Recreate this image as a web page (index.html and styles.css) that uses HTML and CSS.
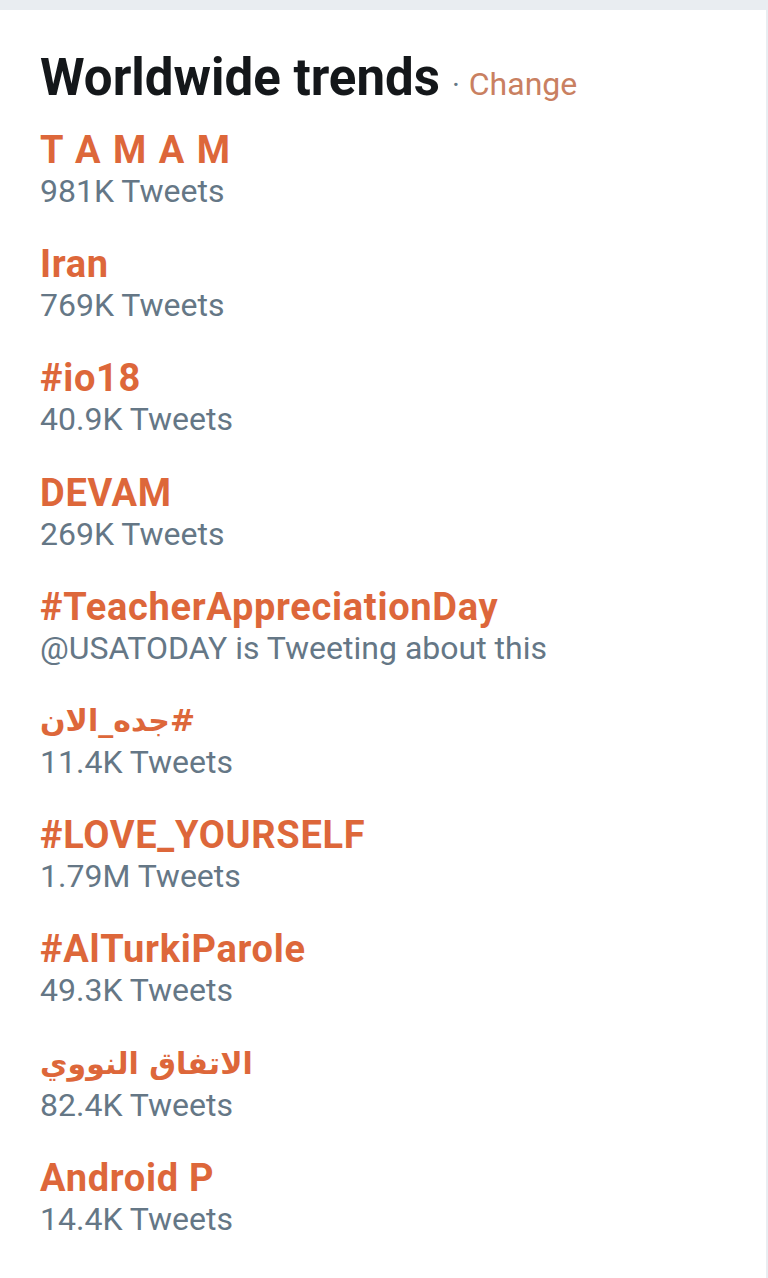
FILE: index.html
```html
<!DOCTYPE html>
<html>
<head>
<meta charset="utf-8">
<link rel="stylesheet" href="styles.css">
</head>
<body>
<div class="panel">
  <div class="header">
    <span class="heading">Worldwide trends</span>
    <span class="dot">·</span>
    <span class="change">Change</span>
  </div>
  <ul class="trends">
    <li class="trend"><div class="name spaced">T A M A M</div><div class="meta">981K Tweets</div></li>
    <li class="trend"><div class="name">Iran</div><div class="meta">769K Tweets</div></li>
    <li class="trend"><div class="name">#io18</div><div class="meta">40.9K Tweets</div></li>
    <li class="trend"><div class="name">DEVAM</div><div class="meta">269K Tweets</div></li>
    <li class="trend"><div class="name">#TeacherAppreciationDay</div><div class="meta">@USATODAY is Tweeting about this</div></li>
    <li class="trend"><div class="name arabic" dir="rtl">#جده_الان</div><div class="meta">11.4K Tweets</div></li>
    <li class="trend"><div class="name">#LOVE_YOURSELF</div><div class="meta">1.79M Tweets</div></li>
    <li class="trend"><div class="name">#AlTurkiParole</div><div class="meta">49.3K Tweets</div></li>
    <li class="trend"><div class="name arabic" dir="rtl">الاتفاق النووي</div><div class="meta">82.4K Tweets</div></li>
    <li class="trend"><div class="name">Android P</div><div class="meta">14.4K Tweets</div></li>
  </ul>
</div>
</body>
</html>
```
FILE: styles.css
```css
html, body {
  margin: 0;
  padding: 0;
}
body {
  background: #e9edf1;
  width: 768px;
  height: 1278px;
  overflow: hidden;
  font-family: Roboto, "Noto Sans", "DejaVu Sans", sans-serif;
}
.panel {
  margin-top: 10px;
  margin-right: 2px;
  background: #ffffff;
  height: 1268px;
  padding: 38px 0 0 40px;
  box-sizing: border-box;
}
.header {
  display: flex;
  align-items: baseline;
  height: 82px;
}
.heading {
  font-size: 51px;
  font-weight: 700;
  color: #14171a;
  letter-spacing: 0;
}
.dot {
  color: #657786;
  font-size: 30px;
  margin-left: 12px;
}
.change {
  color: #c98061;
  font-size: 32px;
  margin-left: 9px;
}
.trends {
  list-style: none;
  margin: 0;
  padding: 0;
}
.trend {
  height: 114.2px;
}
.name {
  font-size: 38px;
  font-weight: 700;
  color: #dd673a;
  line-height: 40px;
  letter-spacing: 0.7px;
}
.name.spaced {
  letter-spacing: 1.5px;
  white-space: pre;
}
.arabic {
  text-align: left;
  font-family: "DejaVu Sans", sans-serif;
  font-size: 30px;
  letter-spacing: 0;
}
.meta {
  font-size: 32px;
  color: #657786;
  line-height: 43px;
  letter-spacing: 0;
}
```
